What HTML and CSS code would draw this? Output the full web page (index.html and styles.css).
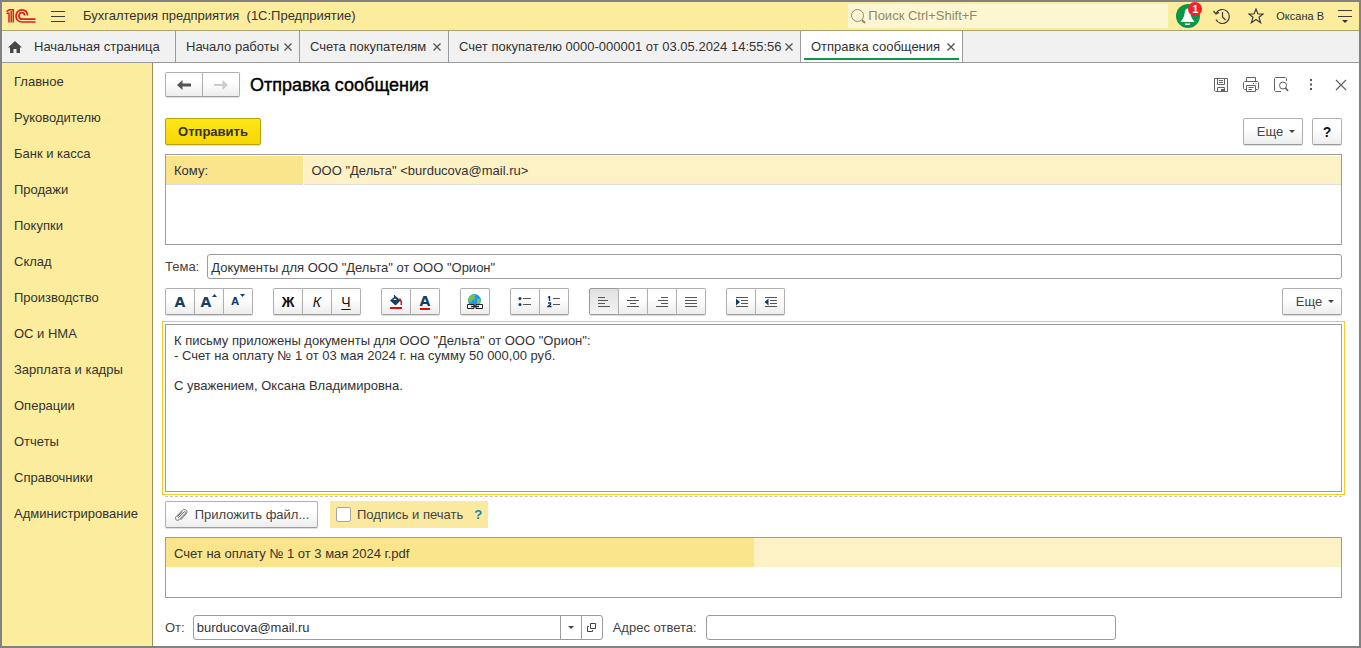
FILE: index.html
```html
<!DOCTYPE html>
<html lang="ru">
<head>
<meta charset="utf-8">
<title>Отправка сообщения</title>
<link rel="stylesheet" href="styles.css">
</head>
<body>
<div class="window">
  <header class="topbar">
    <svg class="logo" width="30" height="14" viewBox="0 0 30 14" fill="none" stroke="#d9201f">
      <path d="M0.500 4.300H3V13.500M0.500 2.500L3.500 0.800H7.300V13.500M5.200 2V13.500" stroke-width="1.500"/>
      <path d="M21.500 6.500C21.200 3 19 0.900 16 0.900C12.500 0.900 10 3.600 10 6.900C10 10.300 12.500 13 16 13H29.500" stroke-width="1.700"/>
      <path d="M18.800 6.500C18.500 4.700 17.600 3.700 16 3.700C14.200 3.700 13 5.100 13 6.900C13 8.800 14.200 10.200 16 10.200H29.500" stroke-width="1.700"/>
    </svg>
    <button class="plain menu" aria-label="Меню"><svg width="14" height="13" viewBox="0 0 14 13" stroke="#3c3c3c"><path d="M0 1.500H14M0 6.500H14M0 11.500H14"/></svg></button>
    <span class="app-title">Бухгалтерия предприятия&nbsp; (1С:Предприятие)</span>
    <label class="search">
      <svg width="16" height="16" viewBox="0 0 16 16" fill="none" stroke="#8f8a6c"><circle cx="7.500" cy="7.500" r="6"/><path d="M12 12L15 15" stroke-width="2"/></svg>
      <input type="search" placeholder="Поиск Ctrl+Shift+F" aria-label="Поиск">
    </label>
    <button class="plain bell" aria-label="Уведомления">
      <svg width="24" height="24" viewBox="0 0 24 24"><circle cx="12" cy="12" r="12" fill="#0a9748"/><path d="M11.500 4.500C9 5 9 7.500 8.500 10C8 13 6.500 15.500 4.500 18H18.500C16.500 15.500 15 13 14.500 10C14 7.500 14 5 11.500 4.500ZM8.500 19.500H14.500L13.500 21H9.500Z" fill="#fff"/></svg>
      <span class="badge">1</span>
    </button>
    <button class="plain" aria-label="История"><svg width="18" height="17" viewBox="0 0 18 17" fill="none" stroke="#3c3c3c" stroke-width="1.200"><path d="M3 5.500A7 7 0 1 1 3 11.500M0.500 3L3 6L6 4.500M9.500 4V9L12.500 12"/></svg></button>
    <button class="plain star" aria-label="Избранное"><svg width="16" height="16" viewBox="0 0 16 16" fill="none" stroke="#3c3c3c" stroke-width="1.200"><path d="M8 1L10 6H15L11 9.300L12.600 14.700L8 11.500L3.400 14.700L5 9.300L1 6H6Z"/></svg></button>
    <a class="user" href="#">Оксана В</a>
    <button class="plain" aria-label="Сервис"><svg width="14" height="14" viewBox="0 0 14 14" stroke="#3c3c3c"><path d="M0 1.500H14M0 7.500H14"/><path d="M4 11H10L7 14Z" fill="#333" stroke="none"/></svg></button>
  </header>

  <nav class="tabs">
    <a class="tab home" href="#"><svg width="14" height="12" viewBox="0 0 14 12" fill="#484848"><path d="M7 0L14 6.500H12V12H8.500V8H5.500V12H2V6.500H0Z"/></svg>Начальная страница</a>
    <div class="tab tab-start"><a href="#">Начало работы</a><button class="plain close" aria-label="Закрыть"><svg width="8" height="8" viewBox="0 0 8 8"><path d="M0.500 0.500L7.500 7.500M7.500 0.500L0.500 7.500"/></svg></button></div>
    <div class="tab tab-list"><a href="#">Счета покупателям</a><button class="plain close" aria-label="Закрыть"><svg width="8" height="8" viewBox="0 0 8 8"><path d="M0.500 0.500L7.500 7.500M7.500 0.500L0.500 7.500"/></svg></button></div>
    <div class="tab tab-doc"><a href="#">Счет покупателю 0000-000001 от 03.05.2024 14:55:56</a><button class="plain close" aria-label="Закрыть"><svg width="8" height="8" viewBox="0 0 8 8"><path d="M0.500 0.500L7.500 7.500M7.500 0.500L0.500 7.500"/></svg></button></div>
    <div class="tab tab-mail active"><a href="#">Отправка сообщения</a><button class="plain close" aria-label="Закрыть"><svg width="8" height="8" viewBox="0 0 8 8"><path d="M0.500 0.500L7.500 7.500M7.500 0.500L0.500 7.500"/></svg></button></div>
  </nav>

  <div class="body">
    <nav class="sidebar">
      <a href="#">Главное</a><a href="#">Руководителю</a><a href="#">Банк и касса</a><a href="#">Продажи</a><a href="#">Покупки</a><a href="#">Склад</a><a href="#">Производство</a><a href="#">ОС и НМА</a><a href="#">Зарплата и кадры</a><a href="#">Операции</a><a href="#">Отчеты</a><a href="#">Справочники</a><a href="#">Администрирование</a>
    </nav>

    <main class="form">
      <div class="row heading">
        <div class="group nav-group">
          <button class="btn" aria-label="Назад"><svg width="14" height="10" viewBox="0 0 14 10" fill="#555"><path d="M0 5L5.500 0V3.500H14V6.500H5.500V10Z"/></svg></button>
          <button class="btn" aria-label="Вперед" disabled><svg width="14" height="10" viewBox="0 0 14 10" fill="#ccc"><path d="M14 5L8.500 0V4H0V6H8.500V10Z"/></svg></button>
        </div>
        <h1>Отправка сообщения</h1>
        <div class="tools">
          <button class="plain" aria-label="Сохранить"><svg width="16" height="16" viewBox="0 0 16 16" fill="none" stroke="#626262"><path d="M1.500 1.500H14.500V14.500H2.500L1.500 13.500ZM4.500 1.500V7.500H11.500V1.500M6 3.500H10M6 5.500H10M4.500 14.500V10.500H11.500V14.500"/><path d="M8 12H11V14H8Z" fill="#626262" stroke="none"/></svg></button>
          <button class="plain" aria-label="Печать"><svg width="16" height="16" viewBox="0 0 16 16" fill="none" stroke="#626262"><path d="M3.500 4.500V0.500H12.500V4.500M3.500 12.500H1.500L0.500 11.500V5.500L1.500 4.500H14.500L15.500 5.500V11.500L14.500 12.500H12.500M3.500 8.500H12.500V14.500H3.500ZM5.500 10.500H10.500M5.500 12.500H9M10 6.500H11M12.500 6.500H13.500"/></svg></button>
          <button class="plain" aria-label="Предварительный просмотр"><svg width="16" height="16" viewBox="0 0 16 16" fill="none" stroke="#626262"><path d="M13.500 4V1.500L12.500 0.500H2.500L1.500 1.500V13.500L2.500 14.500H8"/><circle cx="10" cy="8.500" r="3.500"/><path d="M12.500 11L15 14" stroke-width="1.800"/></svg></button>
          <button class="plain" aria-label="Дополнительно"><svg width="16" height="16" viewBox="0 0 16 16" fill="#555"><path d="M7 2H9V4H7ZM7 6.500H9V8.500H7ZM7 11H9V13H7Z"/></svg></button>
          <button class="plain" aria-label="Закрыть форму"><svg width="16" height="16" viewBox="0 0 16 16" stroke="#626262" stroke-width="1.200"><path d="M3 3L13 13M13 3L3 13"/></svg></button>
        </div>
      </div>

      <div class="row commands">
        <button class="btn primary">Отправить</button>
        <span class="space"></span>
        <button class="btn more">Еще <i class="caret"></i></button>
        <button class="btn help">?</button>
      </div>

      <div class="list recipients">
        <table><tr><th scope="row">Кому:</th><td>ООО "Дельта" &lt;burducova@mail.ru&gt;</td></tr></table>
      </div>

      <div class="row subject">
        <label for="subject">Тема:</label>
        <input class="field" id="subject" type="text" value="Документы для ООО &quot;Дельта&quot; от ООО &quot;Орион&quot;">
      </div>

      <div class="row toolbar">
        <div class="group">
          <button class="btn letter" aria-label="Шрифт">A</button>
          <button class="btn letter" aria-label="Увеличить шрифт">A<svg class="mark" width="5" height="3" viewBox="0 0 5 3"><path d="M0 3L2.500 0L5 3Z"/></svg></button>
          <button class="btn letter small" aria-label="Уменьшить шрифт">A<svg class="mark" width="5" height="3" viewBox="0 0 5 3"><path d="M0 0H5L2.500 3Z"/></svg></button>
        </div>
        <div class="group">
          <button class="btn style-b">Ж</button>
          <button class="btn style-i">К</button>
          <button class="btn style-u">Ч</button>
        </div>
        <div class="group">
          <button class="btn" aria-label="Цвет фона"><svg width="14" height="16" viewBox="0 0 14 16"><path d="M5.500 1V4" stroke="#163f5f"/><path d="M6.500 2L11.500 6.500L6.500 11.500L1 6.500Z" fill="#163f5f"/><path d="M4 6L6 4.500L8 6Z" fill="#fff"/><path d="M9.500 4.500H11.500L13 7V11H11.500V8Z" fill="#d8201c"/><path d="M1 13H13V15H1Z" fill="#dd0a0a"/></svg></button>
          <button class="btn letter" aria-label="Цвет текста"><span class="colored">A</span></button>
        </div>
        <button class="btn tool" aria-label="Ссылка"><svg width="18" height="18" viewBox="0 0 18 18"><circle cx="8.500" cy="7.500" r="6.500" fill="#1e98ee"/><path d="M3 4C5 1.500 8 1 9.500 2L8.500 4L9.500 6L6.500 7L5 9.500L2 8ZM11 6L14 5.500L15 8L13.500 11H11Z" fill="#78c04b"/><path d="M1.500 11.500H8V15.500H1.500ZM10 11.500H16.500V15.500H10Z" fill="#fff" stroke="#222"/><path d="M5 13.500H13" stroke="#222" stroke-width="1.500"/></svg></button>
        <div class="group">
          <button class="btn" aria-label="Маркированный список"><svg width="14" height="12" viewBox="0 0 14 12"><path d="M5 2.500H13M5 8.500H13" stroke="#555"/><circle cx="2" cy="2.500" r="1.500" fill="#123d63"/><circle cx="2" cy="8.500" r="1.500" fill="#123d63"/></svg></button>
          <button class="btn" aria-label="Нумерованный список"><svg width="14" height="12" viewBox="0 0 14 12" fill="none"><path d="M6 2.500H13M6 8.500H13" stroke="#555"/><path d="M1 1.500L2.500 0.500V5M1 7H3.500V8.500L1 10.500H4.500" stroke="#123d63" stroke-width="1.400"/></svg></button>
        </div>
        <div class="group align">
          <button class="btn pressed" aria-label="По левому краю"><svg width="12" height="10" viewBox="0 0 12 10" stroke="#555"><path d="M0 0.500H7M0 3.500H10M0 6.500H7M0 9.500H12"/></svg></button>
          <button class="btn" aria-label="По центру"><svg width="12" height="10" viewBox="0 0 12 10" stroke="#555"><path d="M3 0.500H9M0 3.500H12M3 6.500H9M0 9.500H12"/></svg></button>
          <button class="btn" aria-label="По правому краю"><svg width="12" height="10" viewBox="0 0 12 10" stroke="#555"><path d="M5 0.500H12M2 3.500H12M5 6.500H12M0 9.500H12"/></svg></button>
          <button class="btn" aria-label="По ширине"><svg width="12" height="10" viewBox="0 0 12 10" stroke="#555"><path d="M0 0.500H12M0 3.500H12M0 6.500H12M0 9.500H12"/></svg></button>
        </div>
        <div class="group">
          <button class="btn" aria-label="Увеличить отступ"><svg width="13" height="10" viewBox="0 0 13 10" stroke="#555"><path d="M1 0.500H13M6 3.500H13M6 6.500H13M1 9.500H13"/><path d="M1 1.500L5 5L1 8.500Z" fill="#123d63" stroke="none"/></svg></button>
          <button class="btn" aria-label="Уменьшить отступ"><svg width="13" height="10" viewBox="0 0 13 10" stroke="#555"><path d="M1 0.500H13M6 3.500H13M6 6.500H13M1 9.500H13"/><path d="M4.500 1.500L0.500 5L4.500 8.500Z" fill="#123d63" stroke="none"/></svg></button>
        </div>
        <span class="space"></span>
        <button class="btn more">Еще <i class="caret"></i></button>
      </div>

      <textarea class="editor" aria-label="Текст письма">К письму приложены документы для ООО "Дельта" от ООО "Орион":
- Счет на оплату № 1 от 03 мая 2024 г. на сумму 50 000,00 руб.

С уважением, Оксана Владимировна.</textarea>
      <div class="splitter"></div>

      <div class="row attach">
        <button class="btn file"><svg width="14" height="14" viewBox="0 0 14 14" fill="none" stroke="#6a6a6a"><path d="M4 10L10 4C11 3 12.300 4.300 11.300 5.300L5 11.700C3 13.500 0.200 11 2 8.800L8.500 2.200C11 0 14.500 3 12.300 5.800L6.500 12M3.500 8.500L8.500 3.800"/></svg>Приложить файл...</button>
        <div class="stamp"><label><input type="checkbox">Подпись и печать</label><a href="#">?</a></div>
      </div>

      <div class="list files">
        <table><tr><td class="current">Счет на оплату № 1 от 3 мая 2024 г.pdf</td><td></td></tr></table>
      </div>

      <div class="row sender">
        <label for="from">От:</label>
        <div class="combo">
          <input id="from" type="text" value="burducova@mail.ru">
          <button aria-label="Выбрать"><i class="caret"></i></button>
          <button aria-label="Открыть"><svg width="9" height="9" viewBox="0 0 9 9" fill="none" stroke="#444"><path d="M3.500 0.500H8.500V5.500H3.500ZM2 3.500H0.500V8.500H5.500V7"/></svg></button>
        </div>
        <label for="reply">Адрес ответа:</label>
        <input class="field reply" id="reply" type="text">
      </div>
    </main>
  </div>
</div>
</body>
</html>
```
FILE: styles.css
```css
* { box-sizing: border-box; }
body {
  margin: 0;
  font: 13px/16px "Liberation Sans", Arial, sans-serif;
  color: #333;
}
button, input, textarea { font: inherit; color: inherit; }
a { color: inherit; text-decoration: none; }
svg { display: block; flex: none; }

.window {
  min-height: 100vh;
  display: flex;
  flex-direction: column;
  border: 2px solid #828282;
  background: #fff;
}
.plain {
  display: flex;
  padding: 0;
  border: 0;
  background: none;
}
.space { flex: 1; }

/* Top bar */
.topbar {
  height: 29px;
  flex: none;
  display: flex;
  align-items: center;
  padding: 0 7px 0 4px;
  background: #fbec9e;
  border-bottom: 1px solid #aca46f;
}
.menu { margin: 0 18px 0 15px; }
.app-title { flex: 1; white-space: nowrap; }
.search {
  width: 320px;
  height: 24px;
  display: flex;
  align-items: center;
  padding-left: 2px;
  background: #fdf6d3;
  border-radius: 2px;
  margin-right: 8px;
}
.search svg { margin-right: 2px; }
.search input {
  flex: 1;
  min-width: 0;
  padding: 0;
  border: 0;
  background: none;
  outline: 0;
}
.search input::placeholder { color: #8f8a6c; opacity: 1; }
.bell { position: relative; margin-right: 13px; }
.badge {
  position: absolute;
  top: -2px;
  right: -2px;
  width: 14px;
  height: 14px;
  border-radius: 7px;
  background: #f4202a;
  color: #fff;
  font-weight: bold;
  font-size: 11px;
  line-height: 14px;
}
.star { margin: 0 12px 0 17px; }
.user { font-size: 11px; margin-right: 14px; }

/* Open windows */
.tabs {
  height: 32px;
  flex: none;
  display: flex;
  background: #f1f1f1;
  border-bottom: 1px solid #9a9a9a;
}
.tab {
  display: flex;
  align-items: center;
  justify-content: space-between;
  padding: 1px 7px 0 10px;
  border-right: 1px solid #9a9a9a;
  white-space: nowrap;
}
.home { width: 174px; justify-content: flex-start; gap: 12px; padding-left: 6px; }
.tab-start { width: 124px; }
.tab-list { width: 149px; }
.tab-doc { width: 352px; }
.tab-mail { width: 162px; }
.active { background: linear-gradient(#0a9748, #0a9748) 3px 27px / 155px 2px no-repeat #fff; }
.close svg { fill: none; stroke: #555; stroke-width: 1.3; }

/* Sections */
.body { flex: 1; display: flex; }
.sidebar {
  width: 151px;
  flex: none;
  display: flex;
  flex-direction: column;
  padding-top: 1px;
  background: #fbec9e;
  border-right: 1px solid #99915e;
}
.sidebar a { padding: 10px 12px; }

/* Form */
.form {
  flex: 1;
  min-width: 0;
  display: flex;
  flex-direction: column;
  padding: 9px 17px 6px 12px;
}
.row { display: flex; align-items: center; }
h1 {
  margin: 0 0 0 11px;
  font-size: 18px;
  line-height: 22px;
  font-weight: normal;
  color: #000;
  -webkit-text-stroke: 0.4px #000;
}
.btn {
  height: 27px;
  display: flex;
  align-items: center;
  justify-content: center;
  padding: 0;
  border: 1px solid #b0b0b0;
  border-bottom-color: #9c9c9c;
  border-radius: 2px;
  background: linear-gradient(#fff 40%, #ededed);
  box-shadow: 0 1px 1px #ddd;
  color: #444;
}
.group { display: flex; }
.group .btn { width: 30px; border-radius: 0; }
.group .btn + .btn { margin-left: -1px; }
.group .btn:first-child { border-radius: 2px 0 0 2px; }
.group .btn:last-child { border-radius: 0 2px 2px 0; }
.nav-group .btn { height: 25px; }
.group.nav-group .btn { width: 38px; }
.nav-group { margin-right: -1px; }
.tools { display: flex; gap: 14px; margin-left: auto; margin-right: -7px; }

.commands { margin-top: 21px; gap: 9px; }
.primary {
  width: 96px;
  border-color: #b8a100;
  background: linear-gradient(#ffe61a, #f7d600);
  color: #333;
  font-weight: bold;
}
.more { width: 60px; gap: 6px; padding-left: 6px; }
.caret {
  border: 3px solid transparent;
  border-top-color: #444;
  border-bottom: 0;
}
.help { width: 30px; color: #111; font-weight: bold; font-size: 14px; }

.list { border: 1px solid #9c9c9c; }
.list table { width: 100%; border-collapse: collapse; table-layout: fixed; }
.list th, .list td {
  height: 29px;
  padding: 2px 8px 0;
  text-align: left;
  font-weight: normal;
  background: #fdf1c6;
}
.recipients { height: 91px; margin-top: 9px; }
.recipients table { border-top: 1px solid #fff; border-bottom: 1px solid #ddd; }
.recipients th { width: 137px; background: #fae48c; border-right: 1px solid #fff; }
.list .current { background: #fae48c; }

.subject { margin-top: 9px; gap: 8px; }
label { color: #444; white-space: nowrap; }
.field {
  height: 25px;
  min-width: 0;
  padding: 1px 3px 0;
  border: 1px solid #9c9c9c;
  border-radius: 3px;
}
.subject .field { flex: 1; }

.toolbar { margin-top: 9px; gap: 20px; }
.letter { gap: 1px; color: #163f5f; font: bold 14px/14px "DejaVu Sans", sans-serif; }
.small { font-size: 10px; }
.mark { align-self: flex-start; margin-top: 5px; fill: #163f5f; }
.colored { border-bottom: 2px solid #dd0a0a; }
.style-b, .style-i, .style-u { color: #111; font-size: 14px; }
.style-b { font-weight: bold; }
.style-i { font-style: italic; }
.style-u { text-decoration: underline; text-underline-offset: 2px; }
.tool { width: 30px; }
.pressed { background: linear-gradient(#e0e0e0, #f4f4f4); border-color: #999; }

.editor {
  flex: 1;
  min-height: 160px;
  margin-top: 9px;
  padding: 8px;
  border: 1px solid #9c9c9c;
  outline: 1px solid #f5cc27;
  outline-offset: 2px;
  resize: none;
  line-height: 15px;
}
.splitter { margin-top: 4px; border-top: 1px dashed #c4c4c4; }

.attach { margin-top: 4px; gap: 12px; }
.file { width: 153px; gap: 7px; }
.stamp {
  height: 27px;
  display: flex;
  align-items: center;
  gap: 11px;
  padding: 0 6px;
  background: #fbe9a0;
}
.stamp label { display: flex; align-items: center; gap: 6px; }
.stamp input {
  appearance: none;
  width: 15px;
  height: 15px;
  margin: 0;
  border: 1px solid #a5a5a5;
  border-radius: 2px;
  background: #fff;
}
.stamp a { color: #1a7fae; font-weight: bold; }
.files { height: 61px; margin-top: 9px; }

.sender { margin-top: 17px; }
.combo {
  width: 410px;
  height: 25px;
  display: flex;
  margin: 0 10px 0 8px;
  border: 1px solid #9c9c9c;
  border-radius: 3px;
}
.combo input { flex: 1; min-width: 0; padding: 1px 3px 0; border: 0; background: none; }
.combo button {
  width: 21px;
  display: flex;
  align-items: center;
  justify-content: center;
  padding: 0;
  border: 0;
  border-left: 1px solid #9c9c9c;
  background: none;
}
.reply { width: 410px; margin-left: 9px; }
```
